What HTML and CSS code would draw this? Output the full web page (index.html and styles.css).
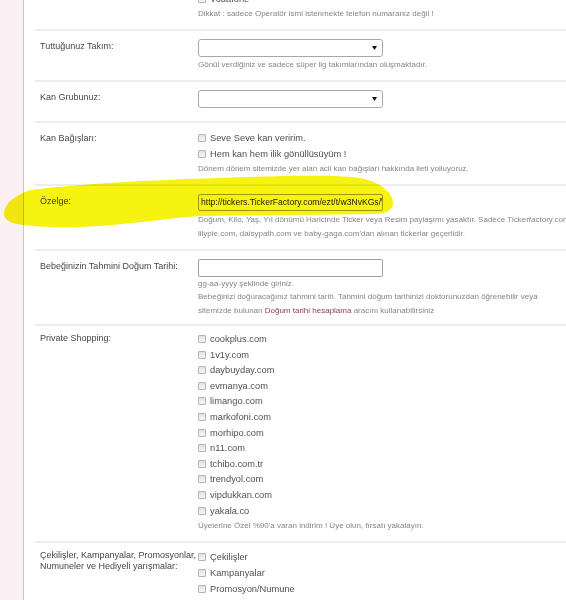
FILE: index.html
```html
<!DOCTYPE html>
<html lang="tr">
<head>
    <meta charset="UTF-8">
    <meta name="viewport" content="width=device-width, initial-scale=1.0">
    <title>Profil Bilgileri</title>
    <link rel="stylesheet" href="styles.css">
</head>
<body>
    <div class="page">
        <div class="side"></div>
        <div class="form">
            <!-- Operatör (üstte kısmen görünen satır) -->
            <div class="row first">
                <div class="label"></div>
                <div class="field">
                    <div class="check"><span class="box"></span>Vodafone</div>
                    <div class="hint">Dikkat : sadece Operatör ismi istenmekte telefon numaranız değil !</div>
                </div>
            </div>

            <div class="row">
                <div class="label">Tuttuğunuz Takım:</div>
                <div class="field">
                    <div class="select"><svg width="5" height="4" viewBox="0 0 5 4"><path d="M0 0H5L2.5 4Z" fill="#111"/></svg></div>
                    <div class="hint spaced">Gönül verdiğiniz ve sadece süper lig takımlarından oluşmaktadır.</div>
                </div>
            </div>

            <div class="row nohint">
                <div class="label">Kan Grubunuz:</div>
                <div class="field">
                    <div class="select"><svg width="5" height="4" viewBox="0 0 5 4"><path d="M0 0H5L2.5 4Z" fill="#111"/></svg></div>
                </div>
            </div>

            <div class="row">
                <div class="label">Kan Bağışları:</div>
                <div class="field">
                    <div class="check"><span class="box"></span>Seve Seve kan veririm.</div>
                    <div class="check"><span class="box"></span>Hem kan hem ilik gönüllüsüyüm !</div>
                    <div class="hint">Dönem dönem sitemizde yer alan acil kan bağışları hakkında ileti yolluyoruz.</div>
                </div>
            </div>

            <div class="row short">
                <div class="label">Özelge:</div>
                <div class="field">
                    <div class="text-input">http://tickers.TickerFactory.com/ezt/t/w3NvKGs/\</div>
                    <div class="hint wide">Doğum, Kilo, Yaş, Yıl dönümü Haricinde Ticker veya Resim paylaşımı yasaktır. Sadece Tickerfactory.com<br>lilypie.com, daisypath.com ve baby-gaga.com'dan alınan tickerlar geçerlidir.</div>
                </div>
            </div>

            <div class="row short">
                <div class="label">Bebeğinizin Tahmini Doğum Tarihi:</div>
                <div class="field">
                    <div class="text-input tall"></div>
                    <div class="hint tight">gg-aa-yyyy şeklinde giriniz.<br>Bebeğinizi doğuracağınız tahmini tarih. Tahmini doğum tarihinizi doktorunuzdan öğrenebilir veya<br>sitemizde bulunan <span class="link">Doğum tarihi hesaplama</span> aracını kullanabilirsiniz</div>
                </div>
            </div>

            <div class="row list">
                <div class="label">Private Shopping:</div>
                <div class="field">
                    <div class="check"><span class="box"></span>cookplus.com</div>
                    <div class="check"><span class="box"></span>1v1y.com</div>
                    <div class="check"><span class="box"></span>daybuyday.com</div>
                    <div class="check"><span class="box"></span>evmanya.com</div>
                    <div class="check"><span class="box"></span>limango.com</div>
                    <div class="check"><span class="box"></span>markofoni.com</div>
                    <div class="check"><span class="box"></span>morhipo.com</div>
                    <div class="check"><span class="box"></span>n11.com</div>
                    <div class="check"><span class="box"></span>tchibo.com.tr</div>
                    <div class="check"><span class="box"></span>trendyol.com</div>
                    <div class="check"><span class="box"></span>vipdukkan.com</div>
                    <div class="check"><span class="box"></span>yakala.co</div>
                    <div class="hint spaced">Üyelerine Özel %90'a varan indirim ! Üye olun, fırsatı yakalayın.</div>
                </div>
            </div>

            <div class="row list">
                <div class="label">Çekilişler, Kampanyalar, Promosyonlar,<br>Numuneler ve Hediyeli yarışmalar:</div>
                <div class="field">
                    <div class="check loose"><span class="box"></span>Çekilişler</div>
                    <div class="check loose"><span class="box"></span>Kampanyalar</div>
                    <div class="check loose"><span class="box"></span>Promosyon/Numune</div>
                    <div class="check loose"><span class="box"></span>Hediyeli yarışmalar</div>
                </div>
            </div>
        </div>
    </div>

    <!-- Fosforlu kalem işareti -->
    <svg class="marker" width="566" height="600" viewBox="0 0 566 600">
        <path d="M4 214 C4 204 14 196 30 190 C80 184 150 180 220 178 C280 176 330 174 360 178 C380 182 392 192 393 202 C394 210 386 214 375 214 L200 216 C160 219 120 226 80 227 C50 228 20 226 10 222 C6 220 4 217 4 214 Z" fill="#f5f30f"/>
    </svg>
</body>
</html>
```

FILE: styles.css
```css
/* Genel */
body {
    margin: 0;
    background-color: #fff;
    font-family: "Liberation Sans", Arial, sans-serif;
    color: #4a4a4a;
    overflow: hidden;
}
.page {
    display: flex;
    min-height: 100vh;
}
.side {
    width: 23px;
    flex-shrink: 0;
    background-color: #fbf0f3;
    border-right: 1px solid #c6c6c6;
}
.form {
    flex: 1;
    padding-left: 11px;
    margin-top: -9px;
}

/* Satırlar */
.row {
    display: flex;
    padding: 8px 0 9px;
    border-bottom: 2px solid #ededed;
}
.row.first {
    padding-top: 0;
}
.row.nohint {
    padding-bottom: 13px;
}
.row.short {
    padding-bottom: 7px;
}
.row.list {
    padding-top: 5px;
}
.label {
    width: 158px;
    flex-shrink: 0;
    padding: 2px 0 0 5px;
    font-size: 9px;
    line-height: 11px;
    color: #474747;
    white-space: nowrap;
}
.field {
    flex: 1;
    min-width: 0;
}

/* Form elemanları */
.select {
    width: 185px;
    height: 18px;
    box-sizing: border-box;
    border: 1px solid #a8a8a8;
    border-radius: 3px;
    display: flex;
    justify-content: flex-end;
    align-items: center;
    padding-right: 5px;
    background-color: #fff;
}
.text-input {
    width: 185px;
    height: 17px;
    box-sizing: border-box;
    border: 1px solid #a0a0a0;
    border-radius: 2px;
    padding: 0 2px;
    font-size: 8.6px;
    line-height: 15px;
    color: #222;
    white-space: nowrap;
    overflow: hidden;
}
.text-input.tall {
    height: 18px;
}
.check {
    display: flex;
    align-items: center;
    height: 15.6px;
    font-size: 9.3px;
    color: #505050;
    white-space: nowrap;
}
.check.loose {
    height: 16.3px;
}
.box {
    width: 8px;
    height: 8px;
    box-sizing: border-box;
    margin-right: 4px;
    border: 1px solid #b4b4b4;
    border-radius: 1px;
    background: linear-gradient(#e2e2e2, #f8f8f8);
}
.hint {
    font-size: 8px;
    line-height: 13px;
    color: #858585;
    white-space: nowrap;
}
.hint.spaced {
    margin-top: 1px;
}
.hint.wide {
    margin-top: 2px;
    line-height: 14.5px;
}
.hint.tight {
    line-height: 13.5px;
}
.link {
    color: #8b3a5e;
}

/* Fosforlu kalem */
.marker {
    position: absolute;
    top: 0;
    left: 0;
    pointer-events: none;
    mix-blend-mode: multiply;
}
```
